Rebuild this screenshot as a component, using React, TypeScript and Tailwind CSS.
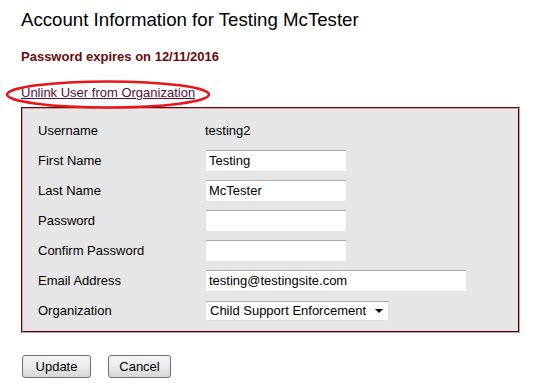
import React from "react";

const font = { fontFamily: '"Liberation Sans", Arial, sans-serif' };

function TextBox({ value, wide }: { value?: string; wide?: boolean }) {
  return (
    <div
      className={`${wide ? "w-[262px]" : "w-[142px]"} h-[22px] bg-white rounded-[2px] border border-[#e2e2e2] border-t-[#ababab] flex items-center pl-[3px] text-[13px] text-black`}
    >
      {value}
    </div>
  );
}

function Row({ label, children }: { label: string; children: React.ReactNode }) {
  return (
    <div className="flex items-center h-[30px]">
      <div className="w-[167px] text-[13px] text-black">{label}</div>
      {children}
    </div>
  );
}

export default function App() {
  return (
    <div className="w-[538px] h-[388px] bg-white relative overflow-hidden" style={font}>
      <div className="pl-[21px] pt-[9px]">
        <h1 className="text-[18.67px] leading-[22px] text-black">Account Information for Testing McTester</h1>
        <div className="mt-[18px] text-[13px] leading-[16px] font-bold text-[#6a0a0a]">Password expires on 12/11/2016</div>
        <div className="mt-[20px] h-[16px] relative text-[13px] leading-[16px]">
          <span className="text-[#560d3c] underline">Unlink User from Organization</span>
          <svg className="absolute left-[-16px] top-[-6px] z-10" width="210" height="32" viewBox="0 0 210 32">
            <ellipse cx="103" cy="15.5" rx="101" ry="13" fill="none" stroke="#e8141a" strokeWidth="2.6" />
          </svg>
        </div>
        <div className="mt-[6px] w-[499px] border border-t-[#4b0d0d] border-l-[#4b0d0d] border-r-[#d8a0a0] border-b-[#d8a0a0]">
          <div className="bg-[#e6e6e6] border border-t-[#d8a0a0] border-l-[#d8a0a0] border-r-[#3a0606] border-b-[#3a0606] pl-[15px] pt-[7px] pb-[5px]">
            <Row label="Username">
              <span className="text-[13px] text-black">testing2</span>
            </Row>
            <Row label="First Name">
              <TextBox value="Testing" />
            </Row>
            <Row label="Last Name">
              <TextBox value="McTester" />
            </Row>
            <Row label="Password">
              <TextBox />
            </Row>
            <Row label="Confirm Password">
              <TextBox />
            </Row>
            <Row label="Email Address">
              <TextBox value="testing@testingsite.com" wide />
            </Row>
            <Row label="Organization">
              <div className="w-[184px] h-[20px] bg-white border border-[#e2e2e2] border-t-[#ababab] flex items-center pl-[4px] pr-[5px] text-[13px] text-black">
                <span className="flex-1">Child Support Enforcement</span>
                <svg width="8" height="4" viewBox="0 0 8 4">
                  <polygon points="0,0 8,0 4,4" fill="#000" />
                </svg>
              </div>
            </Row>
          </div>
        </div>
        <div className="mt-[22px] flex gap-[17px] pl-[1px]">
          <button className="w-[69px] h-[23px] rounded-[3px] border border-[#707070] bg-gradient-to-b from-[#f3f3f3] via-[#ebebeb] to-[#d5d5d5] text-[13px] text-black">
            Update
          </button>
          <button className="w-[63px] h-[23px] rounded-[3px] border border-[#707070] bg-gradient-to-b from-[#f3f3f3] via-[#ebebeb] to-[#d5d5d5] text-[13px] text-black">
            Cancel
          </button>
        </div>
      </div>
    </div>
  );
}
